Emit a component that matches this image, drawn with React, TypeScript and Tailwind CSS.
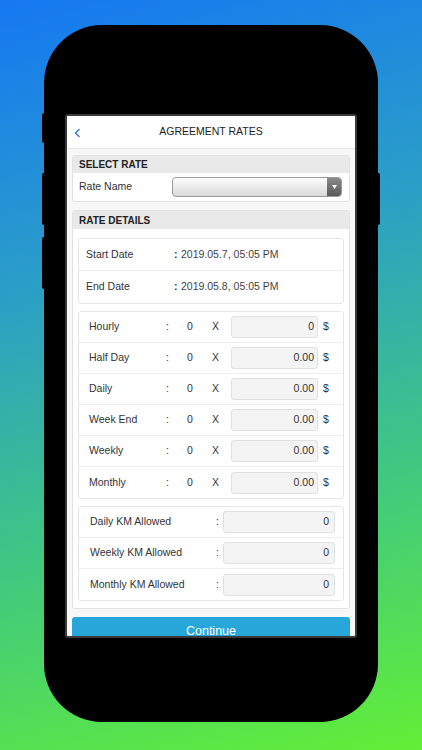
const rates = ["Hourly", "Half Day", "Daily", "Week End", "Weekly", "Monthly"]
const kms = ["Daily KM Allowed", "Weekly KM Allowed", "Monthly KM Allowed"]

const BackIcon = () => (
    <svg width="8" height="10" viewBox="0 0 8 10" fill="none">
        <path d="M6 1.5L2.5 5L6 8.5" stroke="#3d7fd6" strokeWidth="1.6" strokeLinecap="round" strokeLinejoin="round" />
    </svg>
)

const App = () => {
    return (
        <div
            className="w-[422px] h-[750px] overflow-hidden bg-[linear-gradient(165deg,#1578f2_0%,#2c9fc6_35%,#3fc684_65%,#62ef36_100%)] pt-[25px] pl-[44px]"
            style={{ fontFamily: '"Liberation Sans", Arial, sans-serif' }}
        >
            <div className="relative w-[334px] h-[697px] bg-black rounded-[58px] pt-[89px] px-[21px]">
                <div className="absolute left-[-2px] top-[88px] w-[3px] h-[30px] bg-black rounded-l-[2px]" />
                <div className="absolute left-[-2px] top-[148px] w-[3px] h-[52px] bg-black rounded-l-[2px]" />
                <div className="absolute left-[-2px] top-[212px] w-[3px] h-[52px] bg-black rounded-l-[2px]" />
                <div className="absolute right-[-2px] top-[148px] w-[3px] h-[52px] bg-black rounded-r-[2px]" />

                <div className="w-[292px] h-[524px] border-2 border-[#3a3a3a] rounded-[3px] bg-[#f7f7f7] overflow-hidden flex flex-col">
                    <div className="h-[33px] shrink-0 bg-white border-b border-[#e6e6e6] flex items-center relative">
                        <div className="absolute left-[6px] top-[12px]">
                            <BackIcon />
                        </div>
                        <p className="w-full text-center text-[10.5px] text-[#222]">AGREEMENT RATES</p>
                    </div>

                    <div className="px-[5px] pt-[6px] flex flex-col gap-[8px]">
                        <section className="border border-[#e2e2e2] rounded-[3px] bg-white overflow-hidden">
                            <h2 className="h-[17px] bg-[#e9e9e9] flex items-center px-[6px] text-[10px] font-bold text-[#222]">SELECT RATE</h2>
                            <div className="h-[28px] flex items-center px-[6px]">
                                <p className="w-[93px] text-[10.5px] text-[#333]">Rate Name</p>
                                <div className="flex-1 h-[20px] mr-[1px] flex rounded-[4px] border border-[#9a9a9a] overflow-hidden bg-[linear-gradient(#fdfdfd,#d9d9d9)]">
                                    <div className="flex-1" />
                                    <div className="w-[14px] bg-[linear-gradient(#8a8a8a,#5a5a5a)] flex items-center justify-center">
                                        <svg width="5" height="4" viewBox="0 0 5 4">
                                            <path d="M0 0H5L2.5 4Z" fill="#fff" />
                                        </svg>
                                    </div>
                                </div>
                            </div>
                        </section>

                        <section className="border border-[#e2e2e2] rounded-[3px] bg-white overflow-hidden">
                            <h2 className="h-[18px] bg-[#e9e9e9] flex items-center px-[6px] text-[10px] font-bold text-[#222]">RATE DETAILS</h2>
                            <div className="px-[5px] pt-[9px] pb-[7px] flex flex-col gap-[7px]">
                                <div className="border border-[#e6e6e6] rounded-[3px]">
                                    <div className="h-[32px] flex items-center px-[7px] border-b border-[#eeeeee] text-[10.5px] text-[#333]">
                                        <span className="w-[88px]">Start Date</span>
                                        <span className="w-[7px] font-bold">:</span>
                                        <span className="text-[#444]">2019.05.7, 05:05 PM</span>
                                    </div>
                                    <div className="h-[32px] flex items-center px-[7px] text-[10.5px] text-[#333]">
                                        <span className="w-[88px]">End Date</span>
                                        <span className="w-[7px] font-bold">:</span>
                                        <span className="text-[#444]">2019.05.8, 05:05 PM</span>
                                    </div>
                                </div>

                                <div className="border border-[#e6e6e6] rounded-[3px]">
                                    {rates.map((name, i) => (
                                        <div
                                            key={name}
                                            className={`h-[31px] flex items-center pl-[10px] text-[10.5px] text-[#333] ${i < rates.length - 1 ? "border-b border-[#eeeeee]" : ""}`}
                                        >
                                            <span className="w-[77px]">{name}</span>
                                            <span className="w-[21px]">:</span>
                                            <span className="w-[25px]">0</span>
                                            <span className="w-[19px]">X</span>
                                            <div className="w-[87px] h-[22px] bg-[#f4f4f4] border border-[#e0e0e0] rounded-[3px] flex items-center justify-end pr-[3px] text-[#333]">
                                                {i === 0 ? "0" : "0.00"}
                                            </div>
                                            <span className="ml-[5px]">$</span>
                                        </div>
                                    ))}
                                </div>

                                <div className="border border-[#e6e6e6] rounded-[3px]">
                                    {kms.map((name, i) => (
                                        <div
                                            key={name}
                                            className={`h-[31px] flex items-center pl-[11px] pr-[8px] text-[10.5px] text-[#333] ${i < kms.length - 1 ? "border-b border-[#eeeeee]" : ""}`}
                                        >
                                            <span className="w-[126px]">{name}</span>
                                            <span className="w-[7px]">:</span>
                                            <div className="flex-1 h-[22px] bg-[#f4f4f4] border border-[#e0e0e0] rounded-[3px] flex items-center justify-end pr-[5px]">
                                                0
                                            </div>
                                        </div>
                                    ))}
                                </div>
                            </div>
                        </section>

                        <button className="h-[28px] shrink-0 bg-[#27a6da] rounded-[3px] text-white text-[12.5px] leading-none flex items-center justify-center">
                            Continue
                        </button>
                    </div>
                </div>
            </div>
        </div>
    )
}

export default App
